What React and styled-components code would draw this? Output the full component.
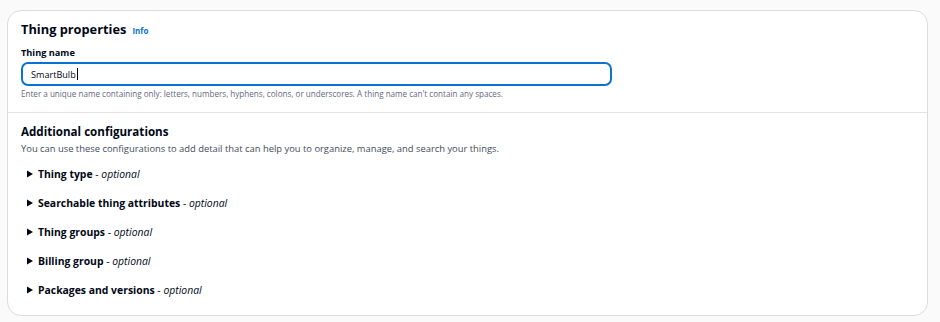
import React from 'react';
import styled, { createGlobalStyle } from 'styled-components';

const GlobalStyle = createGlobalStyle`
  html, body {
    margin: 0;
    padding: 0;
    background: #fafafa;
  }
  body {
    font-family: 'Open Sans', 'Noto Sans', sans-serif;
    color: #000716;
  }
`;

const Page = styled.div`
  padding: 10px 12px 5px 7px;
`;

const Card = styled.section`
  background: #ffffff;
  border: 1px solid #dcdcdc;
  border-radius: 14px;
  overflow: hidden;
`;

const Section = styled.div`
  padding: ${(p) => p.$pad};
  border-top: ${(p) => (p.$divided ? '1px solid #e3e3e3' : 'none')};
`;

const TitleRow = styled.div`
  display: flex;
  align-items: baseline;
  gap: 6px;
`;

const Title = styled.h2`
  margin: 0;
  font-size: ${(p) => p.$size || '12.8px'};
  line-height: ${(p) => p.$lh || '18px'};
  font-weight: 700;
  color: #000716;
`;

const InfoLink = styled.a`
  font-size: 8px;
  font-weight: 700;
  color: #0972d3;
  text-decoration: none;
`;

const Label = styled.label`
  display: block;
  margin-top: 8px;
  font-size: 9.2px;
  line-height: 14px;
  font-weight: 700;
  color: #000716;
`;

const Input = styled.div`
  margin-top: 2px;
  width: 591px;
  height: 24px;
  box-sizing: border-box;
  border: 2px solid #0972d3;
  border-radius: 7px;
  padding: 0 8px;
  display: flex;
  align-items: center;
  font-size: 9.1px;
  color: #000716;
`;

const Caret = styled.span`
  display: inline-block;
  width: 1px;
  height: 12px;
  background: #000716;
  margin-left: 1px;
`;

const Hint = styled.p`
  margin: 2px 0 0;
  font-size: 8.1px;
  line-height: 12px;
  color: #5f6b7a;
`;

const Description = styled.p`
  margin: 2px 0 0;
  font-size: 9.4px;
  line-height: 14px;
  color: #414d5c;
`;

const ExpandList = styled.ul`
  list-style: none;
  margin: 9px 0 0;
  padding: 0 0 0 6px;
  display: flex;
  flex-direction: column;
  gap: 11px;
`;

const ExpandItem = styled.li`
  display: flex;
  align-items: center;
  gap: 5px;
  height: 18px;
  font-size: 10.4px;
  color: #000716;
  white-space: pre;
`;

const Arrow = styled.svg`
  width: 6px;
  height: 8px;
  flex: none;
`;

const Strong = styled.span`
  font-weight: 700;
`;

const Optional = styled.em`
  font-style: italic;
  font-weight: 400;
`;

const sections = [
  'Thing type',
  'Searchable thing attributes',
  'Thing groups',
  'Billing group',
  'Packages and versions',
];

export default function App() {
  return (
    <>
      <GlobalStyle />
      <Page>
        <Card>
          <Section $pad="9px 13px 12px">
            <TitleRow>
              <Title>Thing properties</Title>
              <InfoLink href="#">Info</InfoLink>
            </TitleRow>
            <Label>Thing name</Label>
            <Input>
              SmartBulb
              <Caret />
            </Input>
            <Hint>
              Enter a unique name containing only: letters, numbers, hyphens, colons, or underscores. A
              thing name can't contain any spaces.
            </Hint>
          </Section>
          <Section $divided $pad="11px 13px 16px">
            <Title $size="11.6px" $lh="16px">Additional configurations</Title>
            <Description>
              You can use these configurations to add detail that can help you to organize, manage,
              and search your things.
            </Description>
            <ExpandList>
              {sections.map((name) => (
                <ExpandItem key={name}>
                  <Arrow viewBox="0 0 6 8">
                    <path d="M0 0.5 L6 4 L0 7.5 Z" fill="#000716" />
                  </Arrow>
                  <span>
                    <Strong>{name}</Strong> - <Optional>optional</Optional>
                  </span>
                </ExpandItem>
              ))}
            </ExpandList>
          </Section>
        </Card>
      </Page>
    </>
  );
}
